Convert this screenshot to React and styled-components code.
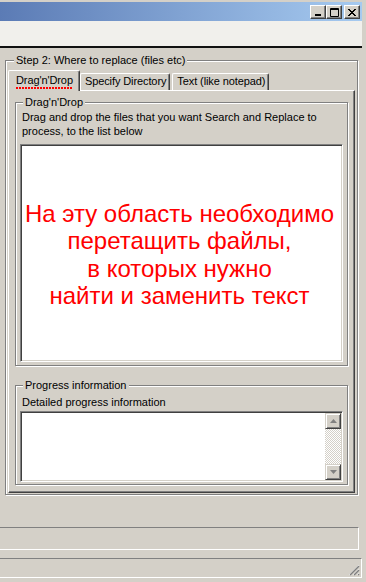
import React from 'react';
import styled, { createGlobalStyle } from 'styled-components';

const GlobalStyle = createGlobalStyle`
  html, body {
    margin: 0;
    padding: 0;
    background: #d4d0c8;
  }
  body {
    font-family: "Liberation Sans", Arial, sans-serif;
    font-size: 11px;
    color: #000;
  }
`;

const Window = styled.div`
  width: 366px;
  height: 582px;
  box-sizing: border-box;
  display: flex;
  flex-direction: column;
  padding: 2px 4px 0 0;
  background: #d4d0c8;
  overflow: hidden;
`;

const TitleBar = styled.div`
  height: 19px;
  flex: none;
  display: flex;
  justify-content: flex-end;
  align-items: flex-start;
  padding: 3px 2px 0 0;
  box-sizing: border-box;
  background: linear-gradient(to right, #5b7bb5, #a6caf0);
`;

const CaptionButton = styled.div`
  width: 16px;
  height: 14px;
  box-sizing: border-box;
  margin-left: ${({ $gap }) => $gap || 0}px;
  display: flex;
  align-items: center;
  justify-content: center;
  background: #d4d0c8;
  border: 1px solid;
  border-color: #fff #404040 #404040 #fff;
  box-shadow: inset -1px -1px 0 #808080;
`;

const MenuBar = styled.div`
  height: 25px;
  flex: none;
  background: #f1f0ec;
  border-bottom: 2px solid #111;
`;

const Client = styled.div`
  flex: 1;
  display: flex;
  flex-direction: column;
`;

const GroupBox = styled.fieldset`
  margin: ${({ $margin }) => $margin};
  padding: ${({ $padding }) => $padding};
  min-width: 0;
  border: 1px solid #808080;
  box-shadow: inset 1px 1px 0 #fff, 1px 1px 0 #fff;
  display: flex;
  flex-direction: column;
`;

const Legend = styled.legend`
  margin-left: ${({ $offset }) => $offset}px;
  padding: 0 2px;
  line-height: 13px;
  background: #d4d0c8;
`;

const TabRow = styled.div`
  display: flex;
  align-items: flex-end;
  height: 20px;
`;

const Tab = styled.div`
  position: relative;
  z-index: ${({ $active }) => ($active ? 1 : 0)};
  height: ${({ $active }) => ($active ? 21 : 17)}px;
  margin-bottom: ${({ $active }) => ($active ? -1 : 0)}px;
  margin-right: ${({ $gap }) => $gap || 0}px;
  padding: ${({ $active }) => ($active ? '3px 6px 0 7px' : '1px 3px 0 4px')};
  box-sizing: border-box;
  line-height: 13px;
  letter-spacing: -0.1px;
  white-space: nowrap;
  background: #d4d0c8;
  border-top: 1px solid #fff;
  border-left: 1px solid #fff;
  border-right: 1px solid #404040;
  box-shadow: inset -1px 0 0 #808080;
  border-radius: 2px 2px 0 0;
`;

const FocusText = styled.span`
  display: inline-block;
  padding-bottom: 2px;
  background: repeating-linear-gradient(to right, #f00 0 2px, transparent 2px 3px) left bottom / 100% 2px no-repeat;
`;

const TabPanel = styled.div`
  height: 403px;
  box-sizing: border-box;
  display: flex;
  flex-direction: column;
  padding: 0 6px;
  border: 1px solid;
  border-color: #fff #404040 #404040 #fff;
  box-shadow: inset -1px -1px 0 #808080;
`;

const Caption = styled.div`
  padding-left: 2px;
  line-height: 14px;
`;

const Sunken = styled.div`
  width: 323px;
  height: ${({ $h }) => $h}px;
  box-sizing: border-box;
  margin-top: ${({ $top }) => $top}px;
  background: #fff;
  border: 1px solid;
  border-color: #808080 #fff #fff #808080;
  box-shadow: inset 1px 1px 0 #404040, inset -1px -1px 0 #d4d0c8;
  display: flex;
  padding: 1px;
`;

const DropArea = styled.div`
  flex: 1;
  display: flex;
  flex-direction: column;
  align-items: center;
  justify-content: center;
  padding: 3px 4px 0 0;
  font-size: 24px;
  line-height: 27.5px;
  color: #f00;
  text-align: center;
  white-space: nowrap;
`;

const ScrollBar = styled.div`
  margin-left: auto;
  width: 16px;
  display: flex;
  flex-direction: column;
`;

const ScrollButton = styled.div`
  width: 16px;
  height: 16px;
  flex: none;
  box-sizing: border-box;
  display: flex;
  align-items: center;
  justify-content: center;
  background: #d4d0c8;
  border: 1px solid;
  border-color: #d4d0c8 #404040 #404040 #d4d0c8;
  box-shadow: inset 1px 1px 0 #fff, inset -1px -1px 0 #808080;
`;

const ScrollTrack = styled.div`
  flex: 1;
  background: repeating-conic-gradient(#fff 0 25%, #d4d0c8 0 50%) 0 0 / 2px 2px;
`;

const EtchedPanel = styled.div`
  height: 23px;
  flex: none;
  box-sizing: border-box;
  margin: 32px 3px 0 -4px;
  border: 1px solid;
  border-color: #808080 #fff #fff #808080;
`;

const StatusBar = styled.div`
  height: 20px;
  flex: none;
  box-sizing: border-box;
  margin: 8px 0 0 -4px;
  display: flex;
  justify-content: flex-end;
  align-items: flex-end;
  border: 1px solid;
  border-color: #808080 #fff #fff #808080;
`;

const Grip = styled.svg`
  display: block;
  margin: 0 1px 1px 0;
`;

const Arrow = ({ up }) => (
  <svg width="7" height="4" viewBox="0 0 7 4">
    <path d={up ? 'M3.5 0 L7 4 L0 4 Z' : 'M0 0 L7 0 L3.5 4 Z'} fill="#808080" />
  </svg>
);

export default function App() {
  return (
    <>
      <GlobalStyle />
      <Window>
        <TitleBar>
          <CaptionButton>
            <svg width="8" height="8" viewBox="0 0 8 8">
              <rect x="1" y="6" width="6" height="2" fill="#000" />
            </svg>
          </CaptionButton>
          <CaptionButton>
            <svg width="9" height="9" viewBox="0 0 9 9">
              <path d="M0.5 0.5h8v8h-8z" fill="none" stroke="#000" />
              <rect x="0" y="1" width="9" height="1" fill="#000" />
            </svg>
          </CaptionButton>
          <CaptionButton $gap={2}>
            <svg width="8" height="7" viewBox="0 0 8 7" shapeRendering="crispEdges">
              <path d="M0 0h2v1h-2zM6 0h2v1h-2zM1 1h2v1h-2zM5 1h2v1h-2zM2 2h4v1h-4zM3 3h2v1h-2zM2 4h4v1h-4zM1 5h2v1h-2zM5 5h2v1h-2zM0 6h2v1h-2zM6 6h2v1h-2z" fill="#000" />
            </svg>
          </CaptionButton>
        </TitleBar>
        <MenuBar />
        <Client>
          <GroupBox $margin="6px 4px 0 5px" $padding="3px 2px 1px">
            <Legend $offset={6}>Step 2: Where to replace (files etc)</Legend>
            <TabRow>
              <Tab $active>
                <FocusText>Drag'n'Drop</FocusText>
              </Tab>
              <Tab $gap={2}>Specify Directory</Tab>
              <Tab>Text (like notepad)</Tab>
            </TabRow>
            <TabPanel>
              <GroupBox $margin="5px 0 0" $padding="1px 4px 3px">
                <Legend $offset={3}>Drag'n'Drop</Legend>
                <Caption>
                  Drag and drop the files that you want Search and Replace to
                  <br />
                  process, to the list below
                </Caption>
                <Sunken $h={218} $top={6}>
                  <DropArea>
                    <div>На эту область необходимо</div>
                    <div>перетащить файлы,</div>
                    <div>в которых нужно</div>
                    <div>найти и заменить текст</div>
                  </DropArea>
                </Sunken>
              </GroupBox>
              <GroupBox $margin="13px 0 0" $padding="3px 4px 2px">
                <Legend $offset={3}>Progress information</Legend>
                <Caption>Detailed progress information</Caption>
                <Sunken $h={71} $top={2}>
                  <ScrollBar>
                    <ScrollButton>
                      <Arrow up />
                    </ScrollButton>
                    <ScrollTrack />
                    <ScrollButton>
                      <Arrow />
                    </ScrollButton>
                  </ScrollBar>
                </Sunken>
              </GroupBox>
            </TabPanel>
          </GroupBox>
          <EtchedPanel />
          <StatusBar>
            <Grip width="12" height="12" viewBox="0 0 12 12">
              <path d="M11 1L1 11M11 5L5 11M11 9L9 11" stroke="#fff" />
              <path d="M11 2L2 11M11 6L6 11M11 10L10 11" stroke="#808080" strokeWidth="1.5" />
            </Grip>
          </StatusBar>
        </Client>
      </Window>
    </>
  );
}
